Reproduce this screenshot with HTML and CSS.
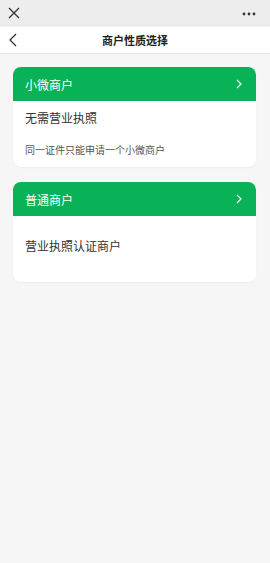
FILE: index.html
```html
<!DOCTYPE html>
<html lang="zh-CN">
<head>
    <meta charset="UTF-8">
    <meta name="viewport" content="width=device-width, initial-scale=1.0">
    <title>商户性质选择</title>
    <link rel="stylesheet" href="styles.css">
</head>
<body>
    <div class="top-bar">
        <svg class="close-icon" width="12" height="12" viewBox="0 0 12 12">
            <path d="M1 1 L11 11 M11 1 L1 11" stroke="#333" stroke-width="1.3" fill="none"/>
        </svg>
        <svg class="more-icon" width="14" height="4" viewBox="0 0 14 4">
            <circle cx="2" cy="2" r="1.4" fill="#333"/>
            <circle cx="7" cy="2" r="1.4" fill="#333"/>
            <circle cx="12" cy="2" r="1.4" fill="#333"/>
        </svg>
    </div>

    <div class="nav-bar">
        <svg class="back-icon" width="8" height="14" viewBox="0 0 8 14">
            <path d="M7 1 L1 7 L7 13" stroke="#333" stroke-width="1.3" fill="none"/>
        </svg>
        <span class="nav-title">商户性质选择</span>
    </div>

    <div class="content">
        <div class="card">
            <div class="card-head">
                <span>小微商户</span>
                <svg width="6" height="10" viewBox="0 0 6 10">
                    <path d="M1 1 L5 5 L1 9" stroke="#fff" stroke-width="1.2" fill="none"/>
                </svg>
            </div>
            <div class="card-body">
                <div class="card-main">无需营业执照</div>
                <div class="card-note">同一证件只能申请一个小微商户</div>
            </div>
        </div>

        <div class="card">
            <div class="card-head">
                <span>普通商户</span>
                <svg width="6" height="10" viewBox="0 0 6 10">
                    <path d="M1 1 L5 5 L1 9" stroke="#fff" stroke-width="1.2" fill="none"/>
                </svg>
            </div>
            <div class="card-body single">
                <div class="card-main">营业执照认证商户</div>
            </div>
        </div>
    </div>
</body>
</html>
```

FILE: styles.css
```css
body {
    margin: 0;
    font-family: "Noto Sans CJK SC", "Noto Sans", sans-serif;
    background: #f6f6f6;
    min-height: 563px;
}

.top-bar {
    height: 27px;
    background: #ededed;
    display: flex;
    align-items: center;
    justify-content: space-between;
    padding: 0 14px 0 8px;
}

.close-icon {
    margin-top: -2px;
}

.nav-bar {
    height: 26px;
    background: white;
    border-bottom: 1px solid #e6e6e6;
    display: flex;
    align-items: center;
    position: relative;
    padding-left: 9px;
}

.nav-title {
    position: absolute;
    left: 0;
    right: 0;
    text-align: center;
    font-size: 11px;
    font-weight: bold;
    color: #222;
}

.content {
    padding: 13px 14px 0 13px;
}

.card {
    background: white;
    border-radius: 8px;
    overflow: hidden;
    height: 100px;
    margin-bottom: 15px;
    box-shadow: 0 1px 2px rgba(0,0,0,0.04);
}

.card-head {
    height: 34px;
    background: #09b256;
    color: white;
    display: flex;
    align-items: center;
    justify-content: space-between;
    padding: 0 14px 0 12px;
    font-size: 12px;
}

.card-body {
    padding: 0 12px;
}

.card-main {
    font-size: 12px;
    color: #333;
    padding-top: 8px;
    line-height: 18px;
}

.card-note {
    font-size: 10px;
    color: #555;
    margin-top: 15px;
}

.card-body.single .card-main {
    padding-top: 21px;
}
```
